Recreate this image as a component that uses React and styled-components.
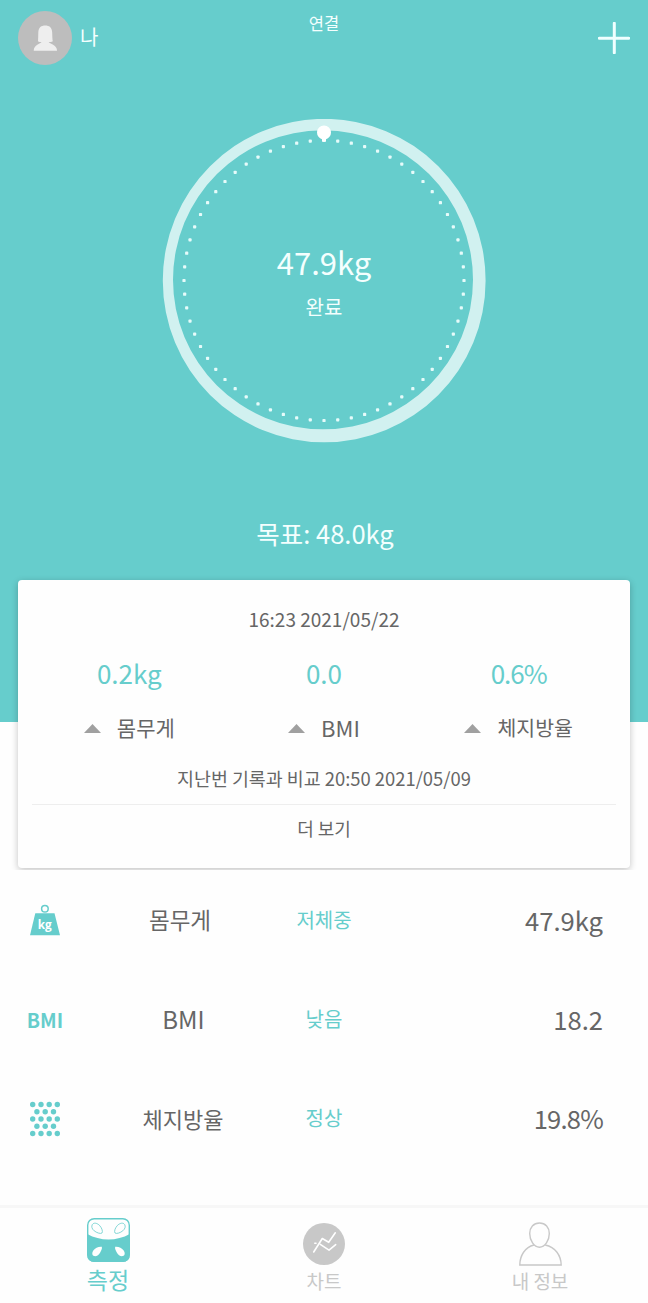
import React from "react";
import styled, { createGlobalStyle } from "styled-components";

const TEAL = "#66cdcc";
const GREY = "#666666";
const MUTED = "#c8c8c8";

const GlobalStyle = createGlobalStyle`
  * { box-sizing: border-box; }
  body {
    margin: 0;
    background: #fefefe;
    font-family: "Noto Sans CJK KR", "Noto Sans", sans-serif;
  }
`;

const Screen = styled.main`
  width: 648px;
  height: 1303px;
  display: flex;
  flex-direction: column;
  overflow: hidden;
  background: #fefefe;
`;

const Label = styled.span`
  font-size: ${(p) => p.$size}px;
  letter-spacing: ${(p) => p.$track || 0}px;
  line-height: 1;
  white-space: nowrap;
`;

const Hero = styled.section`
  height: 722px;
  flex: none;
  display: flex;
  flex-direction: column;
  align-items: center;
  background: ${TEAL};
  color: #f4fffe;
`;

const Header = styled.header`
  width: 100%;
  height: 76px;
  padding: 0 18px;
  display: grid;
  grid-template-columns: 1fr auto 1fr;
  align-items: center;
`;

const Profile = styled.div`
  display: flex;
  align-items: center;
  gap: 8px;

  ${Label} { padding-bottom: 2px; }
`;

const Title = styled.h1`
  margin: 0;
  padding-top: 15px;
  align-self: start;
  font-weight: 400;
  line-height: 1;
  display: flex;
`;

const AddButton = styled.button`
  justify-self: end;
  display: flex;
  padding: 0;
  border: 0;
  background: none;
`;

const Gauge = styled.div`
  width: 324px;
  height: 324px;
  margin-top: 43px;
  display: grid;
  place-items: center;

  & > * { grid-area: 1 / 1; }
`;

const Reading = styled.div`
  display: flex;
  flex-direction: column;
  align-items: center;
  gap: 20px;
  padding-top: 1px;
`;

const Goal = styled.p`
  margin: 77px 0 0 2px;
  display: flex;
`;

const CardArea = styled.section`
  flex: none;
  height: 300px;
  margin-top: -152px;
  padding: 10px 18px 0;
  overflow: hidden;
`;

const Card = styled.div`
  height: 288px;
  padding: 0 14px;
  border-radius: 4px;
  background: #fefefe;
  box-shadow: 0 2px 7px rgba(0, 0, 0, 0.24);
  color: ${GREY};
  display: flex;
  flex-direction: column;
`;

const Line = styled.div`
  height: ${(p) => p.$height}px;
  flex: none;
  display: flex;
  align-items: center;
  justify-content: center;
`;

const Changes = styled.div`
  height: 109px;
  display: grid;
  grid-template-columns: repeat(3, 1fr);
`;

const Change = styled.div`
  display: flex;
  flex-direction: column;
  align-items: center;
`;

const ChangeValue = styled(Line)`
  color: ${TEAL};
`;

const ChangeName = styled(Line)`
  gap: 16px;

  ${Label} { padding-bottom: 2px; }
`;

const Compared = styled(Line)`
  padding-bottom: 12px;
`;

const More = styled(Line)`
  padding-bottom: 3px;
  border-top: 1px solid #eeeeee;
`;

const Metrics = styled.section`
  flex: 1;
  padding-top: 1px;
`;

const MetricRow = styled.div`
  height: 99px;
  padding: 0 45px 0 18px;
  display: grid;
  grid-template-columns: 54px 216px 72px 1fr;
  align-items: center;
  justify-items: center;
  color: ${GREY};
`;

const MetricName = styled.div`
  display: flex;
  padding: 0 0 2px ${(p) => p.$indent || 0}px;
`;

const Status = styled.div`
  display: flex;
  padding-bottom: 1px;
  color: ${TEAL};
`;

const Value = styled.div`
  display: flex;
  justify-self: end;
  padding-bottom: 1px;
`;

const BmiMark = styled.span`
  font-size: 19.5px;
  font-weight: 700;
  line-height: 1;
  color: ${TEAL};
`;

const TabBar = styled.nav`
  height: 98px;
  flex: none;
  padding-top: 10px;
  border-top: 3px solid #f7f7f7;
  display: grid;
  grid-template-columns: repeat(3, 1fr);
`;

const Tab = styled.div`
  display: flex;
  flex-direction: column;
  align-items: center;
  color: ${(p) => (p.$active ? TEAL : MUTED)};
`;

const TabIcon = styled.div`
  height: ${(p) => (p.$active ? 50 : 53)}px;
  padding-top: ${(p) => p.$top || 0}px;
  display: flex;
  align-items: flex-start;
`;

const AvatarIcon = () => (
  <svg width="54" height="54" viewBox="0 0 54 54">
    <circle cx="27" cy="27" r="27" fill="#bdbdbd" />
    <path
      d="M20 30.2C20.2 28 20.2 25 20.3 21.5C20.5 16.5 23.3 14.6 27.2 14.6C31.1 14.6 34 16.5 34.2 21.5C34.3 25 34.3 28 34.8 30.2C33.6 31 32 31.1 30.7 31.1C31.7 33.2 38.8 33.5 39.1 39.7H15.7C16 33.5 22.4 33.2 23.5 31.1C22.2 31.1 21 31 20 30.2Z"
      fill="#eeeeee"
    />
  </svg>
);

const PlusIcon = () => (
  <svg width="32" height="32" viewBox="0 0 32 32" stroke="#f0ffff" strokeWidth="3" strokeLinecap="round">
    <path d="M1.2 16.3H30.8M16.3 1.2V30.8" />
  </svg>
);

const DOTS = Array.from({ length: 64 }, (_, i) => {
  const angle = (i * Math.PI) / 32;
  return [162 + 140 * Math.sin(angle), 161.5 - 140 * Math.cos(angle)];
});

const Dial = () => (
  <svg width="324" height="324" viewBox="0 0 324 324">
    <path
      fillRule="evenodd"
      fill="#d1f1f0"
      d="M.8 161.6a161.4 161.7 0 1 0 322.8 0a161.4 161.7 0 1 0 -322.8 0ZM11 160.8a150 149.5 0 1 0 300 0a150 149.5 0 1 0 -300 0Z"
    />
    {DOTS.map(([x, y], i) => (
      <rect key={i} x={x - 1.6} y={y - 1.6} width="3.2" height="3.2" rx="0.9" fill="#e6fbfa" />
    ))}
    <path d="M155 13.5a7 7 0 1 1 14 0c0 3.5-2.3 5.7-5 6.7v2.3h-4v-2.3c-2.7-1-5-3.2-5-6.7Z" fill="#ffffff" />
  </svg>
);

const UpIcon = () => (
  <svg width="17" height="9" viewBox="0 0 17 9">
    <path d="M8.5 0L17 9H0Z" fill="#a0a0a0" />
  </svg>
);

const WeightIcon = () => (
  <svg width="32" height="34" viewBox="0 0 32 34">
    <circle cx="15.9" cy="4.8" r="3.3" fill="none" stroke={TEAL} strokeWidth="1.5" />
    <path d="M6.3 9.3H25.5L31 31.3H1Z" fill={TEAL} />
    <text x="15.7" y="25.3" textAnchor="middle" fontFamily="Open Sans, sans-serif" fontWeight="700" fontSize="11.8" fill="#ffffff">
      kg
    </text>
  </svg>
);

const FatIcon = () => (
  <svg width="32" height="36" viewBox="0 0 32 36" fill={TEAL}>
    {[3.5, 10.75, 18, 25.25, 32.5].map((y, row) =>
      (row % 2 ? [7.9, 16.2, 24.5] : [3.7, 12, 20.2, 28.3]).map((x) => (
        <circle key={`${x}-${y}`} cx={x} cy={y} r="2.7" />
      ))
    )}
  </svg>
);

const ScaleIcon = () => (
  <svg width="43" height="44" viewBox="0 0 43 44">
    <rect x=".7" y=".7" width="41.6" height="42.6" rx="6.5" fill="#fefefe" stroke={TEAL} strokeWidth="1.4" />
    <path d="M.3 16C13 23.3 30 23.3 42.7 16V36.5Q42.7 44 35.5 44H7.5Q.3 44 .3 36.5Z" fill={TEAL} />
    <g fill="none" stroke={TEAL} strokeWidth=".8">
      <path d="M5.3 6.6C6.8 4.2 10.3 5 12.8 7.7C15 10.2 16 13.6 15 15C13.600 16.200 9.500 14.700 7.200 12.800C4.900 10.900 4.200 8.500 5.300 6.600Z" />
      <path d="M37.7 6.600C36.2 4.2 32.7 5 30.2 7.700C28 10.200 27 13.600 28 15C29.400 16.200 33.500 14.700 35.800 12.800C38.100 10.900 38.800 8.500 37.700 6.600Z" />
    </g>
    <g fill="#fefefe">
      <path d="M14.8 28.7C11.500 28.300 8.200 30 6.300 32.600C4.700 35 5 37.400 6.900 38C9.200 38.700 11.900 37.100 13.200 34.500C14.200 32.400 15.400 30.700 14.800 28.700Z" />
      <path d="M28.200 28.700C31.500 28.300 34.800 30 36.700 32.600C38.300 35 38 37.400 36.100 38C33.800 38.700 31.100 37.100 29.800 34.500C28.800 32.400 27.600 30.700 28.200 28.700Z" />
    </g>
  </svg>
);

const ChartIcon = () => (
  <svg width="42" height="42" viewBox="0 0 42 42">
    <circle cx="21" cy="21" r="21" fill={MUTED} />
    <g fill="none" stroke="#ffffff" strokeWidth="1.6" strokeLinecap="round" strokeLinejoin="round">
      <path d="M10.7 29L19.3 15.5L25.7 19.3L32.3 9.8" />
      <path d="M11.8 20.2H13M17.3 21.3L26 27.2L32.7 21.7" />
    </g>
  </svg>
);

const PersonIcon = () => (
  <svg width="43" height="44" viewBox="0 0 43 44" fill="none" stroke={MUTED} strokeWidth="1.4">
    <path d="M20.500 1C26.500 1 30.300 5.500 30.300 11.500C30.300 18.500 26 25.200 20.500 25.200C15 25.200 10.700 18.500 10.700 11.500C10.700 5.500 14.500 1 20.500 1Z" />
    <path d="M15 23C6 25.200 .9 33.500 .8 43H42.200C42 33.500 36.500 25.200 26.200 23" />
  </svg>
);

const CHANGES = [
  { value: "0.2kg", name: "몸무게", size: 21 },
  { value: "0.0", name: "BMI", size: 22 },
  { value: "0.6%", name: "체지방율", size: 20.5, track: -1 },
];

const METRICS = [
  { icon: <WeightIcon />, name: "몸무게", size: 22.5, status: "저체중", value: "47.9kg" },
  { icon: <BmiMark>BMI</BmiMark>, name: "BMI", size: 24, indent: 7, status: "낮음", value: "18.2" },
  { icon: <FatIcon />, name: "체지방율", size: 22, indent: 6, status: "정상", value: "19.8%", track: -0.8 },
];

export default function App() {
  return (
    <Screen>
      <GlobalStyle />
      <Hero>
        <Header>
          <Profile>
            <AvatarIcon />
            <Label $size={20}>나</Label>
          </Profile>
          <Title>
            <Label $size={16.5}>연결</Label>
          </Title>
          <AddButton aria-label="추가">
            <PlusIcon />
          </AddButton>
        </Header>
        <Gauge>
          <Dial />
          <Reading>
            <Label $size={31}>47.9kg</Label>
            <Label $size={20}>완료</Label>
          </Reading>
        </Gauge>
        <Goal>
          <Label $size={25.5}>목표: 48.0kg</Label>
        </Goal>
      </Hero>
      <CardArea>
        <Card>
          <Line $height={76}>
            <Label $size={19}>16:23 2021/05/22</Label>
          </Line>
          <Changes>
            {CHANGES.map((c) => (
              <Change key={c.name}>
                <ChangeValue $height={33}>
                  <Label $size={26} $track={c.track}>{c.value}</Label>
                </ChangeValue>
                <ChangeName $height={78}>
                  <UpIcon />
                  <Label $size={c.size}>{c.name}</Label>
                </ChangeName>
              </Change>
            ))}
          </Changes>
          <Compared $height={39}>
            <Label $size={18.4}>지난번 기록과 비교 20:50 2021/05/09</Label>
          </Compared>
          <More $height={50}>
            <Label $size={18}>더 보기</Label>
          </More>
        </Card>
      </CardArea>
      <Metrics>
        {METRICS.map((m) => (
          <MetricRow key={m.name}>
            {m.icon}
            <MetricName $indent={m.indent}>
              <Label $size={m.size}>{m.name}</Label>
            </MetricName>
            <Status>
              <Label $size={20}>{m.status}</Label>
            </Status>
            <Value>
              <Label $size={25.6} $track={m.track}>{m.value}</Label>
            </Value>
          </MetricRow>
        ))}
      </Metrics>
      <TabBar>
        <Tab $active>
          <TabIcon $active>
            <ScaleIcon />
          </TabIcon>
          <Label $size={23}>측정</Label>
        </Tab>
        <Tab>
          <TabIcon $top={5}>
            <ChartIcon />
          </TabIcon>
          <Label $size={19}>차트</Label>
        </Tab>
        <Tab>
          <TabIcon $top={4}>
            <PersonIcon />
          </TabIcon>
          <Label $size={19}>내 정보</Label>
        </Tab>
      </TabBar>
    </Screen>
  );
}
